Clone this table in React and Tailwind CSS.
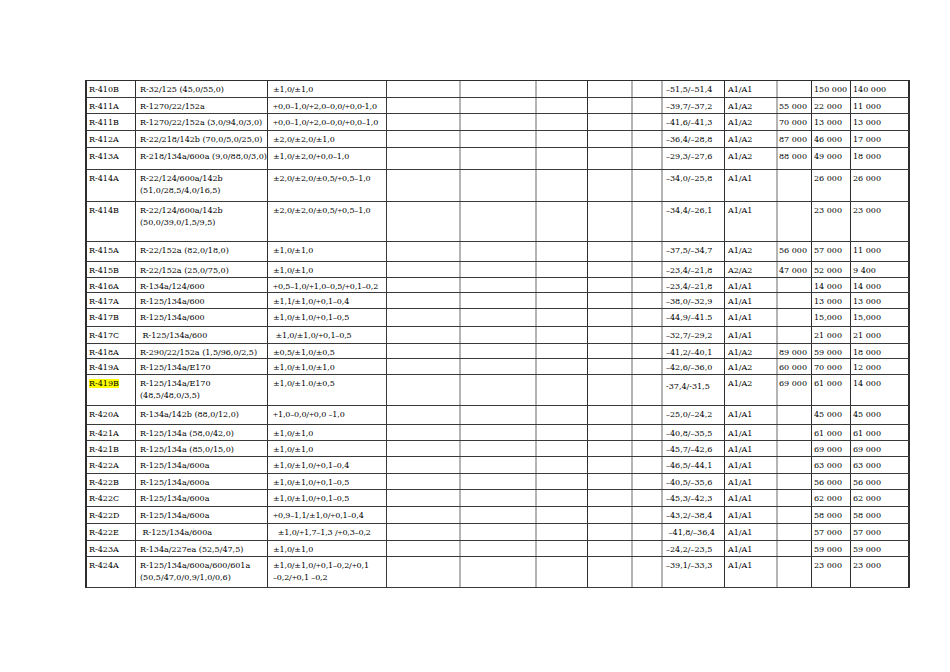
import React from "react";

// column widths incl. right border; gray lines are drawn 2px wide like the scan
const cols = [
  { w: "w-[49px]", line: "border-r border-[#2e2e2e]", pad: "pl-[2px]" },
  { w: "w-[132px]", line: "border-r border-[#2e2e2e]", pad: "pl-[4px]" },
  { w: "w-[119px]", line: "border-r border-[#3a3a3a]", pad: "pl-[5px]" },
  { w: "w-[74px]", line: "border-r-2 border-[#b4b4b4]", pad: "pl-[3px]" },
  { w: "w-[76px]", line: "border-r-2 border-[#b4b4b4]", pad: "pl-[3px]" },
  { w: "w-[51px]", line: "border-r border-[#2e2e2e]", pad: "pl-[3px]" },
  { w: "w-[45px]", line: "border-r-2 border-[#b4b4b4]", pad: "pl-[3px]" },
  { w: "w-[30px]", line: "border-r-2 border-[#b4b4b4]", pad: "pl-[3px]" },
  { w: "w-[62px]", line: "border-r border-[#2e2e2e]", pad: "pl-[3px]" },
  { w: "w-[53px]", line: "border-r-2 border-[#b4b4b4]", pad: "pl-[3px]" },
  { w: "w-[34px]", line: "border-r border-[#2e2e2e]", pad: "pl-[1px]" },
  { w: "w-[39px]", line: "border-r border-[#2e2e2e]", pad: "pl-[2px]" },
  { w: "w-[59px]", line: "border-r-2 border-[#2e2e2e]", pad: "pl-[2px]" },
];

const rows = [
  { h: "h-[17px]", a: "R-410B", b: "R-32/125 (45,0/55,0)", c: "±1,0/±1,0", t: "–51,5/–51,4", s: "A1/A1", x: "", y: "150 000", z: "140 000" },
  { h: "h-[16px]", a: "R-411A", b: "R-1270/22/152a", c: "+0,0–1,0/+2,0–0,0/+0,0-1,0", t: "–39,7/–37,2", s: "A1/A2", x: "55 000", y: "22 000", z: "11 000" },
  { h: "h-[17px]", a: "R-411B", b: "R-1270/22/152a (3,0/94,0/3,0)", c: "+0,0–1,0/+2,0–0,0/+0,0–1,0", t: "–41,6/–41,3", s: "A1/A2", x: "70 000", y: "13 000", z: "13 000" },
  { h: "h-[17px]", a: "R-412A", b: "R-22/218/142b (70,0/5,0/25,0)", c: "±2,0/±2,0/±1,0", t: "–36,4/–28,8", s: "A1/A2", x: "87 000", y: "46 000", z: "17 000" },
  { h: "h-[22px]", a: "R-413A", b: "R-218/134a/600a (9,0/88,0/3,0)", c: "±1,0/±2,0/+0,0–1,0", t: "–29,3/–27,6", s: "A1/A2", x: "88 000", y: "49 000", z: "18 000" },
  { h: "h-[32px]", a: "R-414A", b: ["R-22/124/600a/142b", "(51,0/28,5/4,0/16,5)"], c: "±2,0/±2,0/±0,5/+0,5–1,0", t: "–34,0/–25,8", s: "A1/A1", x: "", y: "26 000", z: "26 000" },
  { h: "h-[40px]", a: "R-414B", b: ["R-22/124/600a/142b", "(50,0/39,0/1,5/9,5)"], c: "±2,0/±2,0/±0,5/+0,5–1,0", t: "–34,4/–26,1", s: "A1/A1", x: "", y: "23 000", z: "23 000" },
  { h: "h-[20px]", a: "R-415A", b: "R-22/152a (82,0/18,0)", c: "±1,0/±1,0", t: "–37,5/–34,7", s: "A1/A2", x: "56 000", y: "57 000", z: "11 000" },
  { h: "h-[16px]", a: "R-415B", b: "R-22/152a (25,0/75,0)", c: "±1,0/±1,0", t: "–23,4/–21,8", s: "A2/A2", x: "47 000", y: "52 000", z: "9 400" },
  { h: "h-[15px]", a: "R-416A", b: "R-134a/124/600", c: "+0,5–1,0/+1,0–0,5/+0,1–0,2", t: "–23,4/–21,8", s: "A1/A1", x: "", y: "14 000", z: "14 000" },
  { h: "h-[16px]", a: "R-417A", b: "R-125/134a/600", c: "±1,1/±1,0/+0,1–0,4", t: "–38,0/–32,9", s: "A1/A1", x: "", y: "13 000", z: "13 000" },
  { h: "h-[18px]", a: "R-417B", b: "R-125/134a/600", c: "±1,0/±1,0/+0,1–0,5", t: "–44,9/–41.5", s: "A1/A1", x: "", y: "15,000", z: "15,000" },
  { h: "h-[17px]", a: "R-417C", b: " R-125/134a/600", c: " ±1,0/±1,0/+0,1–0,5", t: "–32,7/–29,2", s: "A1/A1", x: "", y: "21 000", z: "21 000" },
  { h: "h-[15px]", a: "R-418A", b: "R-290/22/152a (1,5/96,0/2,5)", c: "±0,5/±1,0/±0,5", t: "–41,2/–40,1", s: "A1/A2", x: "89 000", y: "59 000", z: "18 000" },
  { h: "h-[16px]", a: "R-419A", b: "R-125/134a/E170", c: "±1,0/±1,0/±1,0", t: "–42,6/–36,0", s: "A1/A2", x: "60 000", y: "70 000", z: "12 000" },
  { h: "h-[31px]", a: "R-419B", mark: true, b: ["R-125/134a/E170", "(48,5/48,0/3,5)"], c: "±1,0/±1.0/±0,5", t: "-37,4/-31,5", low: true, s: "A1/A2", x: "69 000", y: "61 000", z: "14 000" },
  { h: "h-[19px]", a: "R-420A", b: "R-134a/142b (88,0/12,0)", c: "+1,0–0,0/+0,0 –1,0", t: "–25,0/–24,2", s: "A1/A1", x: "", y: "45 000", z: "45 000" },
  { h: "h-[16px]", a: "R-421A", b: "R-125/134a (58,0/42,0)", c: "±1,0/±1,0", t: "–40,8/–35,5", s: "A1/A1", x: "", y: "61 000", z: "61 000" },
  { h: "h-[16px]", a: "R-421B", b: "R-125/134a (85,0/15,0)", c: "±1,0/±1,0", t: "–45,7/–42,6", s: "A1/A1", x: "", y: "69 000", z: "69 000" },
  { h: "h-[17px]", a: "R-422A", b: "R-125/134a/600a", c: "±1,0/±1,0/+0,1–0,4", t: "–46,5/–44,1", s: "A1/A1", x: "", y: "63 000", z: "63 000" },
  { h: "h-[16px]", a: "R-422B", b: "R-125/134a/600a", c: "±1,0/±1,0/+0,1–0,5", t: "–40,5/–35,6", s: "A1/A1", x: "", y: "56 000", z: "56 000" },
  { h: "h-[17px]", a: "R-422C", b: "R-125/134a/600a", c: "±1,0/±1,0/+0,1–0,5", t: "–45,3/–42,3", s: "A1/A1", x: "", y: "62 000", z: "62 000" },
  { h: "h-[17px]", a: "R-422D", b: "R-125/134a/600a", c: "+0,9–1,1/±1,0/+0,1–0,4", t: "–43,2/–38,4", s: "A1/A1", x: "", y: "58 000", z: "58 000" },
  { h: "h-[17px]", a: "R-422E", b: " R-125/134a/600a", c: "  ±1,0/+1,7–1,3 /+0,3–0,2", t: " –41,8/–36,4", s: "A1/A1", x: "", y: "57 000", z: "57 000" },
  { h: "h-[16px]", a: "R-423A", b: "R-134a/227ea (52,5/47,5)", c: "±1,0/±1,0", t: "–24,2/–23,5", s: "A1/A1", x: "", y: "59 000", z: "59 000" },
  { h: "h-[31px]", a: "R-424A", b: ["R-125/134a/600a/600/601a", "(50,5/47,0/0,9/1,0/0,6)"], c: ["±1,0/±1,0/+0,1–0,2/+0,1", "–0,2/+0,1 –0,2"], t: "–39,1/–33,3", s: "A1/A1", x: "", y: "23 000", z: "23 000" },
];

// the scan's plus sign is much narrower than DejaVu's, borrow Liberation's
function Line({ text }) {
  const parts = text.split("+");
  return parts.map((p, i) => (
    <React.Fragment key={i}>
      {i > 0 && (
        <span className="font-['Liberation_Serif',serif] text-[9px] leading-[0]">+</span>
      )}
      {p}
    </React.Fragment>
  ));
}

function Text({ value }) {
  if (Array.isArray(value)) {
    return value.map((line, i) => (
      <div key={i}>
        <Line text={line} />
      </div>
    ));
  }
  return <Line text={value} />;
}

export default function App() {
  return (
    <div className="min-h-[672px] w-[950px] bg-white pt-[80px] pl-[85px] font-['DejaVu_Serif',serif] text-[8px] leading-[12px] text-black">
      <div className="inline-flex flex-col border-t border-l-2 border-[#2e2e2e]">
        {rows.map((r) => {
          const cells = [r.a, r.b, r.c, "", "", "", "", "", r.t, r.s, r.x, r.y, r.z];
          return (
            <div key={r.a} className={`flex ${r.h} border-b border-[#3a3a3a]`}>
              {cells.map((v, i) => (
                <div
                  key={i}
                  className={`${cols[i].w} ${cols[i].line} ${cols[i].pad} shrink-0 overflow-hidden whitespace-pre ${
                    i === 2 ? "tracking-[-0.15px]" : ""
                  } ${i === 8 && r.low ? "pt-[6px]" : "pt-[3px]"}`}
                >
                  {i === 0 && r.mark ? (
                    <span className="bg-[#ffff00]">{v}</span>
                  ) : (
                    <Text value={v} />
                  )}
                </div>
              ))}
            </div>
          );
        })}
      </div>
    </div>
  );
}
